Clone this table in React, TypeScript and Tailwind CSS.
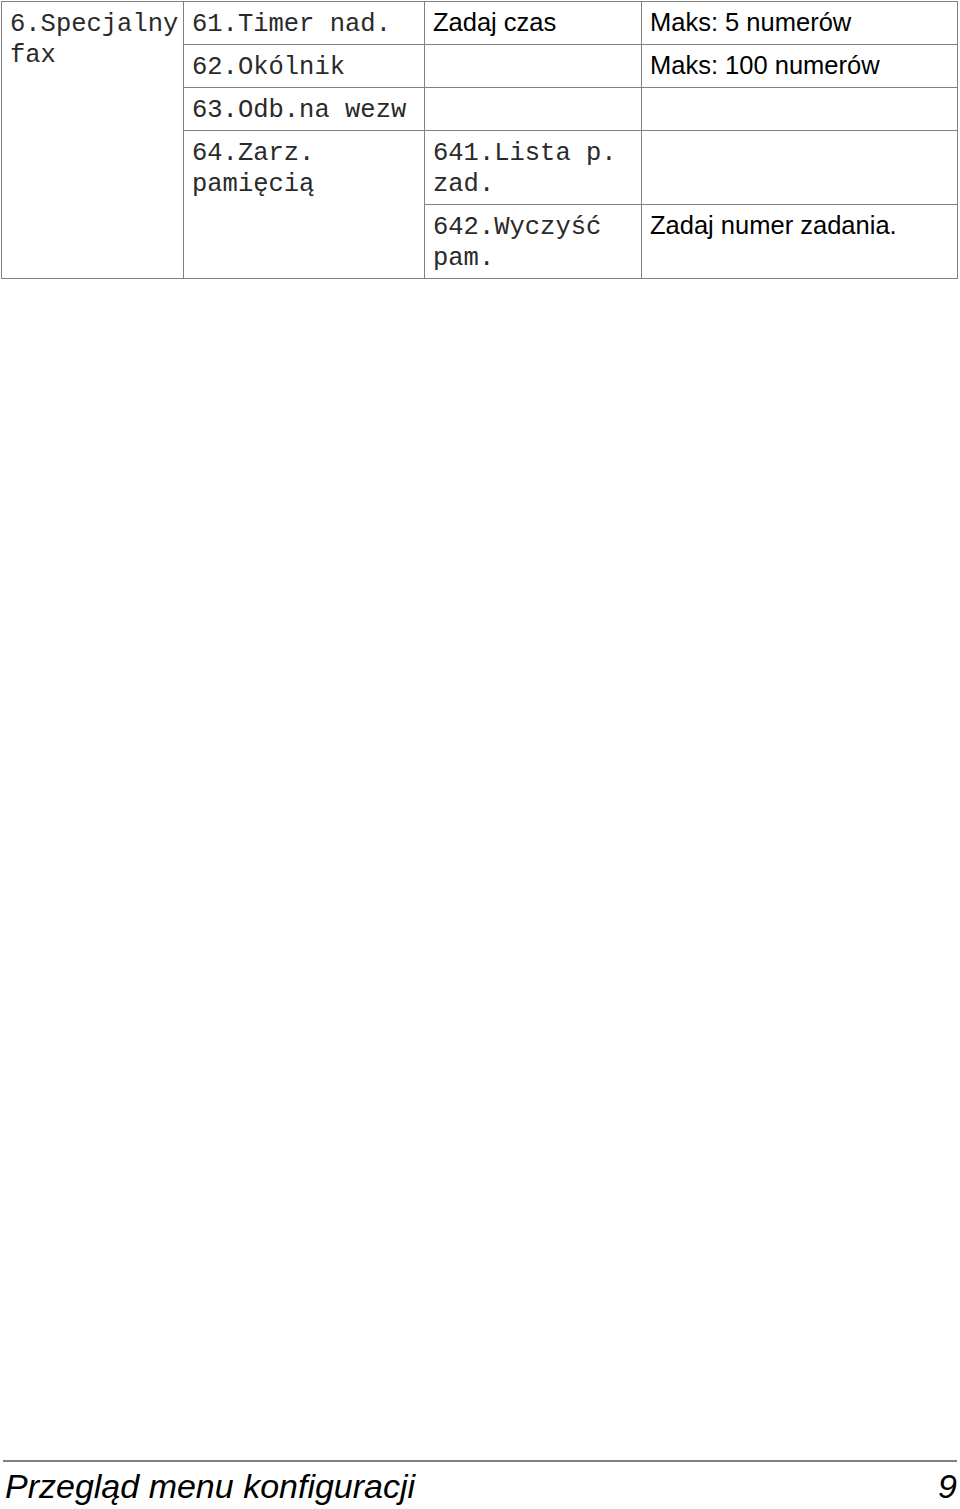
const mono = "font-['Liberation_Mono',monospace] text-[#2a2a2a] pt-[7px] pb-[4px]";
const sans = "font-['Liberation_Sans',Arial,sans-serif] text-black pt-[5px] pb-[6px]";
const cell = 'border border-[#808080] align-top pl-[8px] pr-[4px] leading-[31px] text-[25.5px]';

export default function App() {
  return (
    <div className="flex min-h-[1509px] flex-col bg-white">
      <div className="pl-[1px] pt-[1px]">
        <table className="w-[956px] table-fixed border-collapse">
          <colgroup>
            <col className="w-[182px]" />
            <col className="w-[241px]" />
            <col className="w-[217px]" />
            <col className="w-[316px]" />
          </colgroup>
          <tbody>
            <tr>
              <td rowSpan={5} className={`${cell} ${mono}`}>6.Specjalny fax</td>
              <td className={`${cell} ${mono}`}>61.Timer nad.</td>
              <td className={`${cell} ${sans}`}>Zadaj czas</td>
              <td className={`${cell} ${sans}`}>Maks: 5 numerów</td>
            </tr>
            <tr>
              <td className={`${cell} ${mono}`}>62.Okólnik</td>
              <td className={`${cell} ${sans}`}></td>
              <td className={`${cell} ${sans}`}>Maks: 100 numerów</td>
            </tr>
            <tr>
              <td className={`${cell} ${mono}`}>63.Odb.na wezw</td>
              <td className={`${cell} ${sans}`}>&nbsp;</td>
              <td className={`${cell} ${sans}`}></td>
            </tr>
            <tr>
              <td rowSpan={2} className={`${cell} ${mono}`}>64.Zarz. pamięcią</td>
              <td className={`${cell} ${mono}`}>641.Lista p. zad.</td>
              <td className={`${cell} ${sans}`}></td>
            </tr>
            <tr>
              <td className={`${cell} ${mono}`}>642.Wyczyść pam.</td>
              <td className={`${cell} ${sans}`}>Zadaj numer zadania.</td>
            </tr>
          </tbody>
        </table>
      </div>

      <footer className="mt-auto h-[49px] px-[3px]">
        <div className="border-t-2 border-[#808080]" />
        <div className="flex items-start justify-between pl-[2px] pt-[5px] font-['Liberation_Sans',Arial,sans-serif] text-[34px] leading-[39px] text-black italic">
          <span>Przegląd menu konfiguracji</span>
          <span>9</span>
        </div>
      </footer>
    </div>
  );
}
